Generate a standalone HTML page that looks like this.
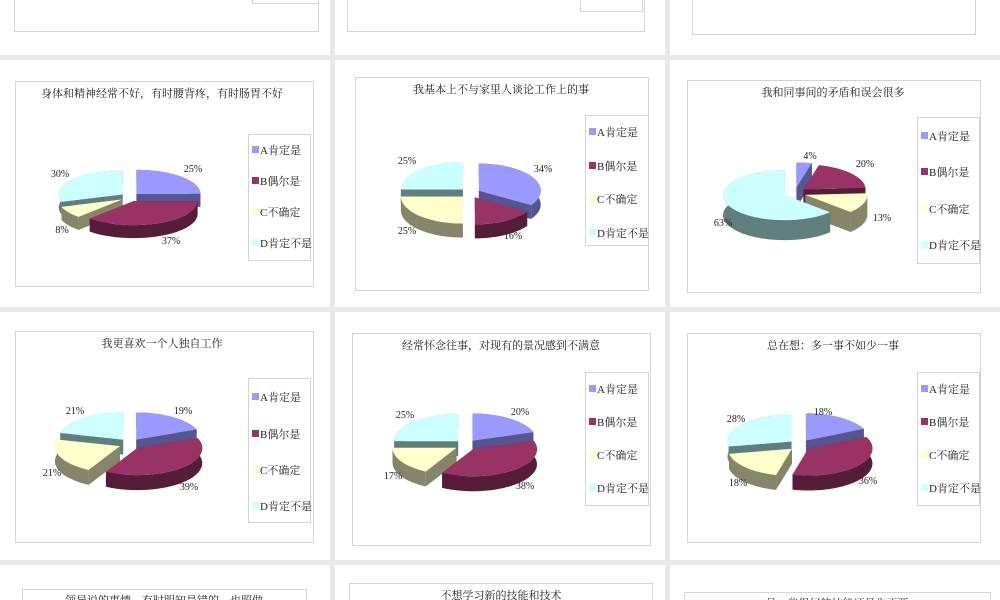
<!DOCTYPE html>
<html style="overflow:hidden;height:600px"><head><meta charset="utf-8"><style>
body{margin:0;width:1000px;height:600px;background:#e9e9e9;position:relative;overflow:hidden;font-family:"Liberation Serif","Noto Serif CJK SC",serif}
.cell{position:absolute;background:#fff;overflow:hidden}
.box{position:absolute;border:1px solid #d4d4d4;background:#fff;box-sizing:border-box}
svg{position:absolute;left:0;top:0}
</style></head><body>
<div class="cell" style="left:0;top:0;width:330px;height:55px"></div>
<div class="cell" style="left:335px;top:0;width:330px;height:55px"></div>
<div class="cell" style="left:670px;top:0;width:330px;height:55px"></div>
<div class="cell" style="left:0;top:60px;width:330px;height:247px"></div>
<div class="cell" style="left:335px;top:60px;width:330px;height:247px"></div>
<div class="cell" style="left:670px;top:60px;width:330px;height:247px"></div>
<div class="cell" style="left:0;top:312px;width:330px;height:248px"></div>
<div class="cell" style="left:335px;top:312px;width:330px;height:248px"></div>
<div class="cell" style="left:670px;top:312px;width:330px;height:248px"></div>
<div class="cell" style="left:0;top:565px;width:330px;height:35px"></div>
<div class="cell" style="left:335px;top:565px;width:330px;height:35px"></div>
<div class="cell" style="left:670px;top:565px;width:330px;height:35px"></div>

<svg id="s" width="1000" height="600" font-family="Liberation Serif, Noto Serif CJK SC, serif"></svg>
<script>
var NS="http://www.w3.org/2000/svg",S=document.getElementById('s');
function el(t,a,txt){var e=document.createElementNS(NS,t);for(var k in a)e.setAttribute(k,a[k]);if(txt)e.textContent=txt;S.appendChild(e);return e;}
function box(x,y,w,h){el('rect',{x:x+.5,y:y+.5,width:w,height:h,fill:'#fff',stroke:'#d4d4d4'});}
box(14,-10,304,41);box(252,-10,66,13);box(347,-10,297,41);box(580,-10,62,21);box(692,-10,283,44);
box(22,589,284,30);box(349,583,303,30);box(684,592,306,30);
var TOP=['#9999ff','#993366','#ffffcc','#ccffff'],SIDE=['#55558f','#561d3b','#85856a','#5f7f7f'];
var NAMES=['A肯定是','B偶尔是','C不确定','D肯定不是'];
function chart(c){
 box(c.bx,c.by,c.bw,c.bh);
 el('text',{x:c.tx,y:c.by+16,'font-size':11,'text-anchor':'middle',fill:'#222'},c.t);
 box(c.lx,c.ly,c.lw,c.lh);
 for(var i=0;i<4;i++){el('rect',{x:c.lx+4,y:c.li[i]-4,width:7,height:7,fill:TOP[i]});
  el('text',{x:c.lx+12,y:c.li[i]+4,'font-size':11,fill:'#222'},NAMES[i]);}
 var rx=c.rx,ry=c.ry,d=c.d,a=0,sl=[];
 for(i=0;i<4;i++){var a0=a*2*Math.PI/100;a+=c.v[i];var a1=a*2*Math.PI/100;var m=(a0+a1)/2;
  sl.push({i:i,a0:a0,a1:a1,ox:c.cx+c.e*Math.sin(m),oy:c.cy-c.e*0.5*Math.cos(m),m:m});}
 sl.sort(function(p,q){return -Math.cos(p.m)+Math.cos(q.m)});
 sl.forEach(function(s){
  function P(t,dy){return [s.ox+rx*Math.sin(t),s.oy-ry*Math.cos(t)+dy];}
  var n=30,j,t;
  [s.a0,s.a1].forEach(function(t){var p=P(t,0),q=P(t,d);
   el('path',{d:'M'+s.ox+','+s.oy+'L'+p+'L'+q+'L'+s.ox+','+(s.oy+d)+'Z',fill:SIDE[s.i]});});
  var dd='M';for(j=0;j<=n;j++){t=s.a0+(s.a1-s.a0)*j/n;dd+=P(t,0)+'L';}
  for(j=n;j>=0;j--){t=s.a0+(s.a1-s.a0)*j/n;dd+=P(t,d)+(j?'L':'Z');}
  el('path',{d:dd,fill:SIDE[s.i]});
  var tp='M'+s.ox+','+s.oy;for(j=0;j<=n;j++){t=s.a0+(s.a1-s.a0)*j/n;tp+='L'+P(t,0);}
  el('path',{d:tp+'Z',fill:TOP[s.i]});
 });
 for(i=0;i<4;i++)el('text',{x:c.lb[i][0],y:c.lb[i][1],'font-size':10,'text-anchor':'middle',fill:'#222'},c.v[i]+'%');
}
chart({bx:15,by:81,bw:298,bh:205,tx:162,t:'身体和精神经常不好，有时腰背疼，有时肠胃不好',lx:248,ly:134,lw:62,lh:126,li:[150,181,212,243],
 cx:130,cy:197,rx:64,ry:24,d:13,e:9,v:[25,37,8,30],lb:[[193,172],[171,244],[62,233],[60,177]]});
chart({bx:355,by:77,bw:293,bh:213,tx:501,t:'我基本上不与家里人谈论工作上的事',lx:585,ly:115,lw:63,lh:130,li:[132,166,199,233],
 cx:470,cy:193,rx:62,ry:27,d:14,e:10,v:[34,16,25,25],lb:[[543,172],[513,239],[407,234],[407,164]]});
chart({bx:687,by:80,bw:293,bh:212,tx:833,t:'我和同事间的矛盾和误会很多',lx:917,ly:117,lw:62,lh:146,li:[136,172,209,245],
 cx:795,cy:193,rx:62,ry:25,d:20,e:11,v:[4,20,13,63],lb:[[810,159],[865,167],[882,221],[723,226]]});
chart({bx:15,by:331,bw:298,bh:211,tx:162,t:'我更喜欢一个人独自工作',lx:248,ly:378,lw:62,lh:144,li:[397,434,470,506],
 cx:130,cy:444,rx:65,ry:27,d:15,e:11,v:[19,39,21,21],lb:[[183,414],[189,490],[52,476],[75,414]]});
chart({bx:352,by:333,bw:298,bh:212,tx:501,t:'经常怀念往事，对现有的景况感到不满意',lx:585,ly:372,lw:63,lh:133,li:[389,422,455,488],
 cx:466,cy:445,rx:64,ry:27,d:15,e:11,v:[20,38,17,25],lb:[[520,415],[525,489],[393,479],[405,418]]});
chart({bx:687,by:333,bw:293,bh:209,tx:833,t:'总在想：多一事不如少一事',lx:917,ly:372,lw:62,lh:133,li:[389,422,455,488],
 cx:800,cy:445,rx:64,ry:27,d:15,e:11,v:[18,36,18,28],lb:[[823,415],[868,484],[738,486],[736,422]]});
el('text',{x:164,y:604,'font-size':11,'text-anchor':'middle',fill:'#222'},'领导说的事情，有时明知是错的，也照做');
el('text',{x:501,y:599,'font-size':11,'text-anchor':'middle',fill:'#222'},'不想学习新的技能和技术');
el('text',{x:837,y:607,'font-size':11,'text-anchor':'middle',fill:'#222'},'是一些很好的技能还是先不要');
</script>
</body></html>
